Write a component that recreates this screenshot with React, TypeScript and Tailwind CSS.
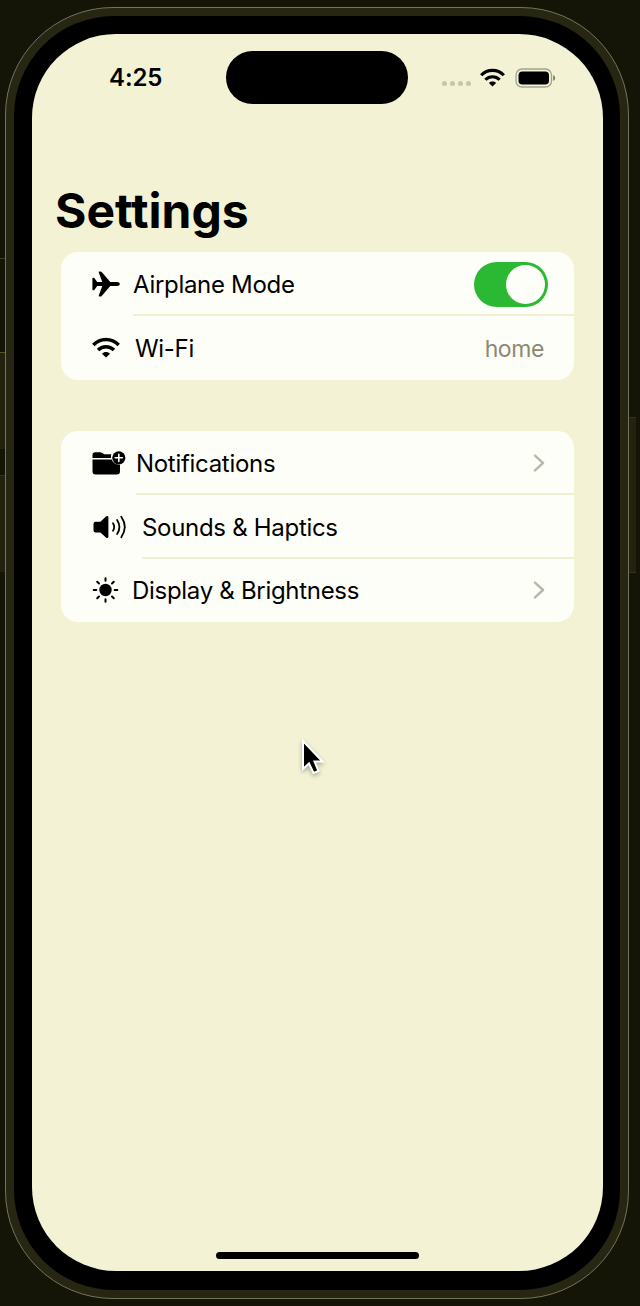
import type { ReactNode } from "react";

function WifiIcon({ className }: { className: string }) {
  return (
    <svg viewBox="0 0 28 21" className={className} fill="none" stroke="black" strokeWidth="3.5">
      <path d="M1.3 8 C8.4 0.6 19.6 0.6 26.7 8" />
      <path d="M6 13 C10.5 8.5 17.5 8.5 22 13" />
      <path d="M14 20.6 L10 16.7 C12 14.5 16 14.5 18 16.7 Z" fill="black" stroke="none" />
    </svg>
  );
}

function AirplaneIcon() {
  return (
    <svg viewBox="0 0 28 26" className="h-[26px] w-7 shrink-0">
      <path
        fill="black"
        d="M10.3 11 L6.8 1.8 Q6.4 .5 7.7 .5 H8.5 Q9.2 .5 9.7 1.1 L18.3 11 H25 C26.6 11 27.8 11.9 27.8 13 S26.6 15 25 15 H18.3 L9.7 24.9 Q9.2 25.5 8.5 25.5 H7.7 Q6.4 25.5 6.8 24.2 L10.3 15 H5.2 L2.5 18.8 Q2.1 19.3 1.5 19.3 H1 Q.4 19.3 .4 18.6 V7.4 Q.4 6.7 1 6.7 H1.5 Q2.1 6.7 2.5 7.2 L5.2 11 Z"
      />
    </svg>
  );
}

function FolderPlusIcon() {
  return (
    <svg viewBox="0 0 34 24" className="h-6 w-[34px] shrink-0">
      <path fill="black" d="M.5 7 V4 Q.5 1.2 3.4 1.2 H8 Q9.4 1.2 10.5 2.1 L11.4 2.8 Q12 3.3 13 3.3 H19.3 Q18.8 5 19.1 7 Z" />
      <path fill="black" d="M.5 8.6 H19.7 C21 12 24 14.2 28 13.8 V20.2 Q28 23.4 24.8 23.4 H3.7 Q.5 23.4 .5 20.2 Z" />
      <circle cx="26.8" cy="6.8" r="6.6" fill="black" />
      <path d="M26.8 3.2 V10.4 M23.2 6.8 H30.4" stroke="white" strokeWidth="1.6" strokeLinecap="round" />
    </svg>
  );
}

function SpeakerIcon() {
  return (
    <svg viewBox="0 0 35 24" className="h-6 w-[35px] shrink-0" fill="none" stroke="black" strokeWidth="1.8" strokeLinecap="round">
      <path
        fill="black"
        stroke="none"
        d="M1.5 9 Q1.5 6.8 3.7 6.8 H7.8 Q8.3 6.8 8.7 6.4 L13.9 1.5 Q14.6 .9 15.2 .9 Q16.4 .9 16.4 2.2 V21.7 Q16.4 23 15.2 23 Q14.6 23 13.9 22.4 L8.7 17.8 Q8.3 17.4 7.8 17.4 H3.7 Q1.5 17.4 1.5 15.2 Z"
      />
      <path d="M21 8.2 Q23.4 12 21 15.8" />
      <path d="M25.1 4.9 Q29.8 12 25.1 19.1" />
      <path d="M29.3 1.8 Q36.3 12 29.3 22.2" />
    </svg>
  );
}

function SunIcon() {
  return (
    <svg viewBox="0 0 28 28" className="size-7 shrink-0" stroke="black" strokeWidth="2" strokeLinecap="round">
      <circle cx="13.5" cy="14" r="6.2" fill="black" stroke="none" />
      <path d="M13.5 2.2 V4.8 M13.5 23.2 V25.8 M1.7 14 H4.3 M22.7 14 H25.3 M5.2 5.7 L7 7.5 M20 20.5 L21.8 22.3 M21.8 5.7 L20 7.5 M7 20.5 L5.2 22.3" />
    </svg>
  );
}

function Chevron() {
  return (
    <svg viewBox="0 0 12 18" className="mr-[29px] h-[18px] w-3" fill="none" stroke="#b9b9aa" strokeWidth="2.4" strokeLinecap="round" strokeLinejoin="round">
      <path d="M2 1.6 L10 9 L2 16.4" />
    </svg>
  );
}

function Row({ icon, gap, label, last, children }: { icon: ReactNode; gap: string; label: string; last?: boolean; children?: ReactNode }) {
  return (
    <div className={"flex items-center pl-[31px] " + (last ? "h-[63.5px] " : "h-16 ") + gap}>
      {icon}
      <div className={"flex h-full min-w-0 flex-1 items-center justify-between " + (last ? "" : "border-b-2 border-[#f0efd2] pt-0.5")}>
        <span className="whitespace-nowrap pt-0.5 text-2xl tracking-[-0.3px]">{label}</span>
        {children}
      </div>
    </div>
  );
}

function StatusBar() {
  return (
    <header className="flex h-[53px] items-center">
      <time className="ml-[77px] w-[117px] text-2xl font-semibold tracking-[-0.1px]">4:25</time>
      <div className="h-[53px] w-[182px] rounded-full bg-black" />
      <div className="ml-[34px] mt-3 flex gap-[3px]">
        {[0, 1, 2, 3].map((i) => (
          <i key={i} className="size-[5px] rounded-full bg-[#c6c6ae]" />
        ))}
      </div>
      <WifiIcon className="ml-[9px] h-[19px] w-[25px]" />
      <svg viewBox="0 0 41 20" className="ml-[10px] h-5 w-[41px]">
        <rect x="1" y="1" width="35.5" height="18" rx="6" fill="none" stroke="#a2a291" strokeWidth="1.3" />
        <rect x="3.5" y="3.5" width="30.5" height="13" rx="3.8" fill="black" />
        <path d="M38.2 7 Q40.2 8 40.2 10 T38.2 13 Z" fill="#777769" />
      </svg>
    </header>
  );
}

export default function App() {
  return (
    <div className="relative h-[1306px] w-[640px] overflow-hidden bg-[#151507] pl-[5px] pt-[7px] font-['Inter',sans-serif] text-black">
      <i className="absolute left-0 top-[258px] h-[94px] w-[5px] border-t border-[#414121] bg-[#151507]" />
      <i className="absolute left-0 top-[352px] h-[97px] w-[5px] border-t border-[#55552a] bg-[#22220f]" />
      <i className="absolute left-0 top-[475px] h-[97px] w-[5px] border-t border-[#33331c] bg-[#22220f]" />
      <i className="absolute left-[629px] top-[417px] h-[156px] w-[7px] border-y border-[#33331f] bg-[#22220f]" />
      <div className="h-[1292px] w-[624px] rounded-[108px] border border-[#74745c] bg-[#262612] p-2">
        <div className="h-full rounded-[100px] bg-black px-[18px] pb-[19px] pt-[18px]">
          <main className="flex h-[1237px] w-[571px] flex-col rounded-[84px] bg-[#f3f2d5] pt-[17px]">
            <StatusBar />
            <h1 className="ml-[23px] mt-[77px] text-[48px] font-bold leading-[60px]">Settings</h1>
            <section className="ml-[29px] mt-[11px] w-[513px] overflow-hidden rounded-[17px] bg-[#fefef8]">
              <Row icon={<AirplaneIcon />} gap="gap-[13px]" label="Airplane Mode">
                <button aria-label="Toggle airplane mode" className="mr-[26px] flex h-[45px] w-[74px] items-center justify-end rounded-full bg-[#2bb934] p-[3px]">
                  <span className="size-[39px] rounded-full bg-[#fefef8]" />
                </button>
              </Row>
              <Row icon={<WifiIcon className="h-[21px] w-7 shrink-0" />} gap="gap-[15px]" label="Wi-Fi" last>
                <span className="mr-[30px] pt-0.5 text-[23px] tracking-[-0.4px] text-[#8a8a72]">home</span>
              </Row>
            </section>
            <section className="ml-[29px] mt-[51px] w-[513px] overflow-hidden rounded-[17px] bg-[#fefef8]">
              <Row icon={<FolderPlusIcon />} gap="gap-[10px]" label="Notifications">
                <Chevron />
              </Row>
              <Row icon={<SpeakerIcon />} gap="gap-[15px]" label="Sounds & Haptics" />
              <Row icon={<SunIcon />} gap="gap-3" label="Display & Brightness" last>
                <Chevron />
              </Row>
            </section>
            <i className="mb-[12px] ml-[184px] mt-auto h-[7px] w-[203px] rounded-full bg-black" />
          </main>
        </div>
      </div>
      <svg viewBox="0 0 30 42" className="absolute left-[298px] top-[737px] h-[42px] w-[30px] drop-shadow-[0_2px_2px_rgba(0,0,0,0.3)]">
        <path d="M5 4 V32 L11 26.5 L15.5 36 L20.5 34 L16.5 24.5 H24.5 Z" fill="black" stroke="white" strokeWidth="2" />
      </svg>
    </div>
  );
}
